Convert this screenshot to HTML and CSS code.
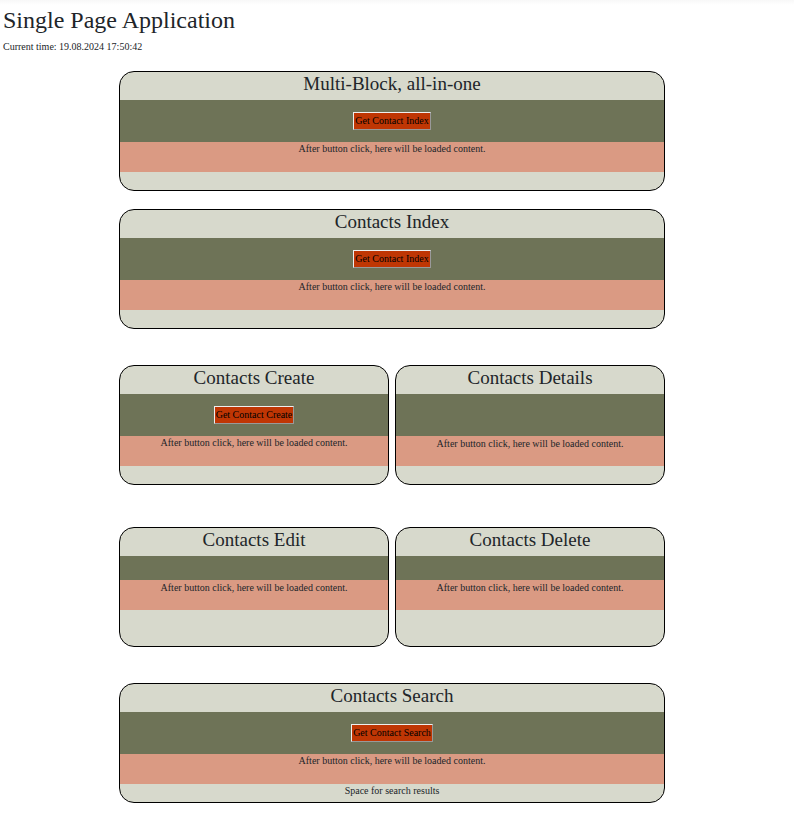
FILE: index.html
```html
<!DOCTYPE html>
<html lang="en">
<head>
<meta charset="utf-8">
<meta name="viewport" content="width=device-width, initial-scale=1">
<title>Single Page Application</title>
<link rel="stylesheet" href="styles.css">
</head>
<body>
<header class="page-header">
  <h1>Single Page Application</h1>
  <p>Current time: 19.08.2024 17:50:42</p>
</header>
<main class="blocks">
  <section class="card">
    <h2>Multi-Block, all-in-one</h2>
    <div class="actions"><button type="button">Get Contact Index</button></div>
    <div class="content">After button click, here will be loaded content.</div>
  </section>
  <section class="card">
    <h2>Contacts Index</h2>
    <div class="actions"><button type="button">Get Contact Index</button></div>
    <div class="content">After button click, here will be loaded content.</div>
  </section>
  <div class="pair">
    <section class="card">
      <h2>Contacts Create</h2>
      <div class="actions"><button type="button">Get Contact Create</button></div>
      <div class="content">After button click, here will be loaded content.</div>
    </section>
    <section class="card">
      <h2>Contacts Details</h2>
      <div class="actions"></div>
      <div class="content content-low">After button click, here will be loaded content.</div>
    </section>
  </div>
  <div class="pair pair-short">
    <section class="card">
      <h2>Contacts Edit</h2>
      <div class="actions"></div>
      <div class="content content-low">After button click, here will be loaded content.</div>
    </section>
    <section class="card">
      <h2>Contacts Delete</h2>
      <div class="actions"></div>
      <div class="content content-low">After button click, here will be loaded content.</div>
    </section>
  </div>
  <section class="card">
    <h2>Contacts Search</h2>
    <div class="actions"><button type="button">Get Contact Search</button></div>
    <div class="content">After button click, here will be loaded content.</div>
    <div class="results">Space for search results</div>
  </section>
</main>
</body>
</html>
```
FILE: styles.css
```css
* {
  box-sizing: border-box;
}

body {
  margin: 0;
  padding: 0 12px 13px 2px;
  background: #fff linear-gradient(#f8f8f8, #fff) no-repeat top / 100% 5px;
  color: #212529;
  font: 10px/14px "Liberation Serif", "Times New Roman", serif;
}

h1,
h2,
p {
  margin: 0;
  font-weight: 400;
}

.page-header {
  padding: 6px 1px 17px;
}

h1 {
  margin-bottom: 6px;
  font-size: 24px;
  line-height: 28px;
}

.blocks {
  width: 70%;
  min-width: 440px;
  max-width: 960px;
  margin: 0 auto;
}

.card {
  min-height: 120px;
  margin-bottom: 18px;
  overflow: hidden;
  border: 1px solid #000;
  border-radius: 15px;
  background: #d7d9cc;
  text-align: center;
}

h2 {
  padding-bottom: 4px;
  font-size: 19px;
  line-height: 24px;
}

.actions {
  display: flex;
  align-items: center;
  justify-content: center;
  height: 42px;
  background: #6e7357;
}

.content {
  min-height: 30px;
  background: #da9a83;
}

.content-low {
  padding-top: 1px;
}

.pair {
  display: grid;
  grid-template-columns: 1fr 1fr;
  gap: 6px;
  padding: 18px 0;
}

.pair .card {
  margin: 0;
}

.pair-short {
  padding: 24px 0 36px;
}

.pair-short .actions {
  height: 24px;
}

button {
  height: 18px;
  padding: 0 1px;
  border: 1px solid;
  border-color: #eee #999 #999 #eee;
  background: #bf3604;
  color: #000;
  font: inherit;
}
```
